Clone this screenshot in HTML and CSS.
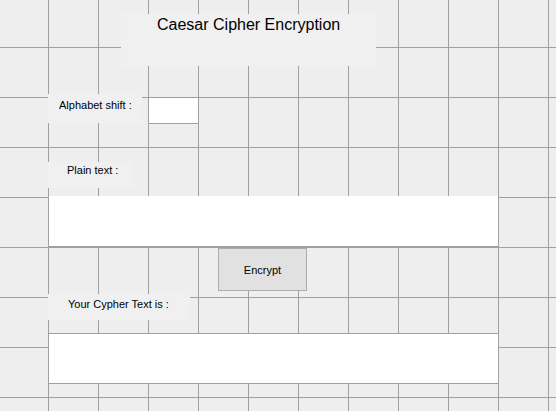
FILE: index.html
```html
<!DOCTYPE html>
<html lang="en">
<head>
<meta charset="utf-8">
<title>Caesar Cipher Encryption</title>
<link rel="stylesheet" href="styles.css">
</head>
<body>
<main class="frame">
  <h1 class="title">Caesar Cipher Encryption</h1>
  <div class="shift-row">
    <label class="patch patch-shift" for="shift">Alphabet shift :</label>
    <input id="shift" class="field field-shift" type="text">
  </div>
  <label class="patch patch-plain" for="plain">Plain text :</label>
  <input id="plain" class="field field-wide field-plain" type="text">
  <button class="encrypt" type="button">Encrypt</button>
  <div class="patch patch-cypher">Your Cypher Text is :</div>
  <div class="field field-wide field-output"></div>
</main>
</body>
</html>
```
FILE: styles.css
```css
html, body {
  margin: 0;
  padding: 0;
}

body {
  width: 556px;
  height: 411px;
  overflow: hidden;
  background: #eeeeee;
  font-family: "Liberation Sans", Arial, sans-serif;
  color: #000;
}

.frame {
  width: 556px;
  height: 411px;
  display: flex;
  flex-direction: column;
  align-items: flex-start;
  background-color: #eeeeee;
  background-image:
    linear-gradient(to right, transparent 48px, #a0a0a0 48px, #a0a0a0 49px, transparent 49px),
    linear-gradient(to bottom, transparent 47px, #a0a0a0 47px, #a0a0a0 48px, transparent 48px);
  background-size: 50px 50px;
}

.title {
  box-sizing: border-box;
  margin: 14px 0 0 121px;
  width: 255px;
  height: 52px;
  padding: 2px 0 0 36px;
  font-size: 16px;
  font-weight: normal;
  line-height: 18px;
  background: #f0f0f0;
}

.patch {
  box-sizing: border-box;
  display: block;
  font-size: 11px;
  line-height: 13px;
  background: #f0f0f0;
  white-space: nowrap;
}

.shift-row {
  display: flex;
  align-items: flex-start;
  margin-top: 28px;
}

.patch-shift {
  margin-left: 48px;
  width: 94px;
  height: 29px;
  padding: 5px 0 0 11px;
}

.field {
  -webkit-appearance: none;
  appearance: none;
  box-sizing: border-box;
  display: block;
  padding: 0;
  border: 0;
  border-radius: 0;
  outline: none;
  background: #ffffff;
  font-family: "Liberation Sans", Arial, sans-serif;
  font-size: 11px;
}

.field-shift {
  margin: 4px 0 0 7px;
  width: 49px;
  height: 26px;
  border-bottom: 1px solid #a0a0a0;
}

.patch-plain {
  margin: 38px 0 0 48px;
  width: 86px;
  height: 26px;
  padding: 2px 0 0 19px;
}

.field-wide {
  margin-left: 49px;
  width: 449px;
  height: 51px;
}

.field-plain {
  margin-top: 8px;
  border-bottom: 1px solid #a0a0a0;
}

.encrypt {
  box-sizing: border-box;
  margin: 1px 0 0 218px;
  width: 89px;
  height: 43px;
  padding: 0;
  border: 1px solid #adadad;
  border-radius: 0;
  background: #e1e1e1;
  color: #000;
  font-family: "Liberation Sans", Arial, sans-serif;
  font-size: 11px;
}

.patch-cypher {
  margin: 3px 0 0 48px;
  width: 142px;
  height: 26px;
  padding: 4px 0 0 20px;
}

.field-output {
  margin-top: 13px;
  border-top: 1px solid #a0a0a0;
  border-bottom: 1px solid #a0a0a0;
}
```
